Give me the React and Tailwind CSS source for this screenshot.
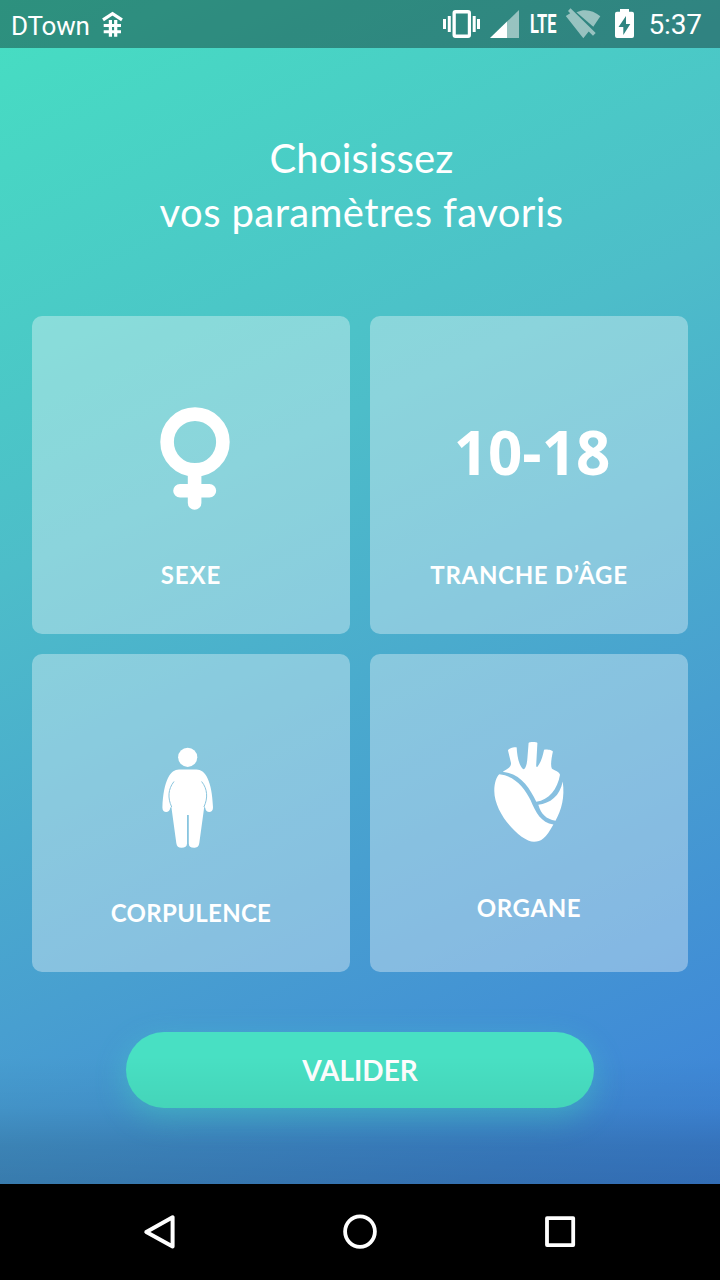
function StatusBar() {
  return (
    <header className="flex h-12 shrink-0 items-center bg-black/35 pl-[11px] pr-[18px] font-['Roboto',sans-serif]">
      <span className="pt-[3px] text-[26px] leading-none tracking-[-0.2px]">DTown</span>
      <svg className="ml-[10px] h-12 w-6" viewBox="100 0 24 48" fill="none" stroke="white">
        <path d="M103 19.8 L112.5 13.6 L122 19.8" strokeWidth="3.2" />
        <path d="M110.4 20 V36.7 M115.7 20 V36.7" strokeWidth="3.2" />
        <path d="M103.7 25.4 H121 M103.7 31.7 H121" strokeWidth="3" />
      </svg>
      <div className="ml-auto flex items-center">
        <svg className="h-12 w-[78px]" viewBox="442 0 78 48" fill="white">
          <path fillRule="evenodd" d="M455.5 10 h12.5 a3 3 0 0 1 3 3 v22 a3 3 0 0 1 -3 3 h-12.5 a3 3 0 0 1 -3 -3 v-22 a3 3 0 0 1 3 -3 z M455.8 13.5 v21 h12 v-21 z" />
          <path d="M443 19 h3 v10 h-3 z M447.8 16 h3 v16 h-3 z M472.7 16 h3 v16 h-3 z M477 19 h3 v10 h-3 z" />
          <path d="M490 38 L507 21.6 V38 z" />
          <path d="M507 21.6 L519 10 V38 H507 z" fillOpacity="0.5" />
        </svg>
        <span className="ml-[10px] w-[28px] pt-[3px]">
          <span className="inline-block origin-left scale-x-[0.66] text-[25px] leading-none font-bold">LTE</span>
        </span>
        <svg className="ml-[7px] h-12 w-[72px]" viewBox="565 0 72 48" fill="white">
          <g fillOpacity="0.5">
            <path d="M576.5 12.3 C585 8.3 593 10.5 600.3 16.3 L593.3 26.8 z" />
            <path d="M570.5 8.3 L595.7 33 L593 35.7 L588.7 31.5 L583.3 38.3 L565.8 16 L570.2 13.3 L568 11 z" />
          </g>
          <path fillRule="evenodd" d="M620 9 h9 v2.8 h3 a2 2 0 0 1 2 2 v22.2 a2 2 0 0 1 -2 2 h-15 a2 2 0 0 1 -2 -2 v-22.2 a2 2 0 0 1 2 -2 h3 z M626 16 L618.5 27 H623.3 V35 L630.3 24 H626 z" />
        </svg>
        <span className="ml-[11px] pt-[2px] text-[28px] leading-none tracking-[-0.1px]">5:37</span>
      </div>
    </header>
  );
}

function FemaleIcon() {
  return (
    <svg className="h-[112px] w-[110px]" viewBox="136 402 110 112" fill="none" stroke="white" strokeWidth="13.6">
      <circle cx="195" cy="442" r="27.9" />
      <path strokeLinecap="round" d="M194.6 476 V503 M180 490.8 H209.4" />
    </svg>
  );
}

function BodyIcon() {
  return (
    <svg className="h-[112px] w-[110px]" viewBox="136 740 110 112" fill="white">
      <circle cx="187.7" cy="757.3" r="9.6" />
      <path d="M179 769.4 H196.5 C205 769.4 212 780 213 807.5 C213.2 813.5 205.6 813.5 205.3 808 L204.3 806.5 L199.3 843 C198.8 847 196.5 847.8 194 847.8 C190.5 847.8 188.8 846.5 188.8 843.5 V815 H187 V843.5 C187 846.5 185 847.8 181.5 847.8 C178.5 847.8 176.7 846.5 176.3 843 L171.3 806.5 L170.2 808 C169.8 813.5 162.2 813.5 162.4 807.5 C163.5 780 170.5 769.4 179 769.4 z" />
      <path d="M174 781.5 C168 789 167.5 798 171.7 807 M201.6 781.5 C207.6 789 208.1 798 203.9 807" fill="none" stroke="#8ac5de" strokeWidth="1" />
    </svg>
  );
}

function HeartIcon() {
  return (
    <svg className="h-[112px] w-[110px]" viewBox="474 740 110 112" fill="white">
      <path d="M502.7 771.7 C507 769.5 511.5 767 511 763 L508 750.5 C507.8 748.5 515.5 746.2 516.7 747.6 C517 756 519 766 523.3 769.2 C525.8 769.4 527.2 763 527.5 757 L528.6 743 C528.8 741.6 537.3 741.6 537.4 743 L536.2 765 C536.2 767.5 537.2 767.7 538 766 C541 762 542.8 756 544 750 C544.5 748.7 552.7 749.8 552.9 751.5 C551.5 758 550.3 765 551.8 768.6 C554 770.5 559 771.5 560 774.7 C557.5 789 549 800 536.3 801.7 C529 787 521 774 502.7 771.7 z" />
      <path d="M499.3 774.3 C515 776 524.5 788 530.5 800 C536 813 541 822.5 553.4 824.5 C546 838 541 841.8 534 841.8 C521 841.8 494.3 814 494.3 791 C494.3 783 496.5 776.5 499.3 774.3 z" />
      <path d="M562.7 781.5 C565 797 561.5 810 555.5 820.7 C546 819 541 814 538.3 804.7 C550 803.5 560 796 562.7 781.5 z" />
    </svg>
  );
}

function Card({ children, label }) {
  return (
    <button className="flex h-[318px] flex-col items-center rounded-[10px] bg-white/35">
      {children}
      {label}
    </button>
  );
}

function NavigationBar() {
  return (
    <nav className="flex h-24 shrink-0 items-center justify-center gap-[160px] bg-black">
      <svg className="h-10 w-10" viewBox="140 1212 40 40" fill="none" stroke="white" strokeWidth="4" strokeLinejoin="round">
        <path d="M146.3 1231.9 L172.6 1217.3 V1246.5 z" />
      </svg>
      <svg className="h-10 w-10" viewBox="340 1212 40 40" fill="none" stroke="white" strokeWidth="3.8">
        <ellipse cx="360" cy="1231.6" rx="14.9" ry="15.3" />
      </svg>
      <svg className="h-10 w-10" viewBox="540 1212 40 40" fill="none" stroke="white" strokeWidth="3.8" strokeLinejoin="round">
        <rect x="547" y="1218.2" width="26.2" height="26.9" />
      </svg>
    </nav>
  );
}

const labelFont = "text-[24px] leading-[30px] font-bold";

export default function App() {
  return (
    <div className="flex h-[1280px] w-[720px] flex-col overflow-hidden bg-[#3f7fd8] font-['Lato',sans-serif] text-white">
      <div className="relative flex h-[1184px] flex-col bg-[linear-gradient(155deg,#46dfc2_0%,#4dbdc9_38%,#489fd0_68%,#3f89d7_92%,#3d84dc_100%)]">
        <StatusBar />
        <main className="flex flex-1 flex-col items-center px-8 pt-[83px]">
          <h1 className="h-[185px] pl-[3px] text-center text-[40px] leading-[54px] font-normal">
            <span className="block tracking-[0.2px]">Choisissez</span>
            <span className="block tracking-[0.4px]">vos paramètres favoris</span>
          </h1>
          <div className="grid w-full grid-cols-2 gap-5">
            <Card label={<span className={`mt-[46px] tracking-[0.9px] ${labelFont}`}>SEXE</span>}>
              <div className="mt-[86px]">
                <FemaleIcon />
              </div>
            </Card>
            <Card label={<span className={`mt-[46px] tracking-[0.7px] ${labelFont}`}>TRANCHE D’ÂGE</span>}>
              <div className="mt-[86px] flex h-[112px] items-start pl-[6px] pt-[15px] font-['Open_Sans',sans-serif] text-[60px] leading-[70px] font-bold">
                10-18
              </div>
            </Card>
            <Card label={<span className={`mt-[46px] tracking-[0.3px] ${labelFont}`}>CORPULENCE</span>}>
              <div className="mt-[86px]">
                <BodyIcon />
              </div>
            </Card>
            <Card label={<span className={`mt-[41px] tracking-[0.6px] ${labelFont}`}>ORGANE</span>}>
              <div className="mt-[86px]">
                <HeartIcon />
              </div>
            </Card>
          </div>
          <button className="mt-[60px] h-[76px] w-[468px] rounded-full bg-[#48e0c3] text-[28px] font-bold shadow-[0_10px_30px_rgba(72,224,195,0.42)]">
            VALIDER
          </button>
        </main>
        <div className="pointer-events-none absolute inset-x-0 bottom-0 h-[128px] bg-[linear-gradient(180deg,rgba(0,0,0,0)_0%,rgba(0,0,0,0.05)_40%,rgba(0,0,0,0.14)_70%,rgba(0,0,0,0.18)_100%)]" />
      </div>
      <NavigationBar />
    </div>
  );
}
